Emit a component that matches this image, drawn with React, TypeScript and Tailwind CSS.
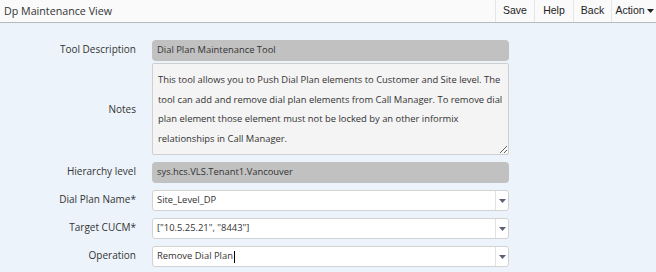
import { ReactNode } from "react";

const sans = "font-['Open_Sans',_'Noto_Sans',_sans-serif]";

function Row({ label, children, top = "pt-[2px]" }: { label: string; children: ReactNode; top?: string }) {
  return (
    <div className="flex items-start gap-[16px]">
      <div className={`w-[136px] shrink-0 text-right text-[10px] leading-[14px] text-[#333] ${top}`}>{label}</div>
      {children}
    </div>
  );
}

function ReadOnlyBox({ value }: { value: string }) {
  return (
    <div className="flex h-[21px] w-[357px] items-center rounded-[4px] bg-[#c1c1c1] px-[5px] text-[9.4px] text-[#333]">
      {value}
    </div>
  );
}

function SelectBox({ value, cursor }: { value: string; cursor?: boolean }) {
  return (
    <div className="flex h-[21px] w-[357px] items-stretch rounded-[3px] border border-[#d2d2d2] bg-white">
      <div className="flex flex-1 items-center px-[4px] text-[9.4px] text-[#333]">
        {value}
        {cursor && <span className="ml-[1px] inline-block h-[12px] w-px bg-black" />}
      </div>
      <div className="flex w-[13px] items-center justify-center border-l border-[#e2e2e2]">
        <svg width="7" height="4" viewBox="0 0 7 4">
          <polygon points="0,0 7,0 3.5,4" fill="#5b6074" />
        </svg>
      </div>
    </div>
  );
}

const notes =
  "This tool allows you to Push Dial Plan elements to Customer and Site level. The tool can add and remove dial plan elements from Call Manager. To remove dial plan element those element must not be locked by an other informix relationships in Call Manager.";

export default function App() {
  return (
    <div className={`h-[272px] w-[656px] overflow-hidden bg-[#edf3fa] ${sans}`}>
      <div className="flex h-[23px] items-stretch border-b border-[#b9b9b9] bg-[#fafafa]">
        <div className="flex flex-1 items-center pl-[4px] text-[10.7px] text-[#333]">Dp Maintenance View</div>
        <div className="flex items-stretch font-['Liberation_Sans',_Arial,_sans-serif] text-[10.5px] text-[#222]">
          <div className="flex w-[39px] items-center justify-center border-l border-[#e6e6e6]">Save</div>
          <div className="flex w-[39px] items-center justify-center border-l border-[#e6e6e6]">Help</div>
          <div className="flex w-[38px] items-center justify-center border-l border-[#e6e6e6]">Back</div>
          <div className="flex w-[45px] items-center justify-center gap-[2px] border-l border-[#e6e6e6] pl-[1px]">
            Action
            <svg width="7" height="4" viewBox="0 0 7 4">
              <polygon points="0,0 7,0 3.5,4" fill="#222" />
            </svg>
          </div>
        </div>
      </div>

      <div className="flex flex-col pt-[17px]">
        <Row label="Tool Description">
          <ReadOnlyBox value="Dial Plan Maintenance Tool" />
        </Row>
        <div className="mt-[2px] flex items-center gap-[16px]">
          <div className="w-[136px] shrink-0 text-right text-[10px] leading-[14px] text-[#333]">Notes</div>
          <textarea
            readOnly
            defaultValue={notes}
            className="h-[92px] w-[357px] resize-y overflow-hidden rounded-[2px] border border-[#cfcfcf] bg-[#f4f4f4] px-[5px] pt-[6px] text-[9.4px] leading-[19.5px] text-[#333] outline-none"
          />
        </div>
        <div className="mt-[7px] flex flex-col gap-[7px]">
          <Row label="Hierarchy level">
            <ReadOnlyBox value="sys.hcs.VLS.Tenant1.Vancouver" />
          </Row>
          <Row label="Dial Plan Name*">
            <SelectBox value="Site_Level_DP" />
          </Row>
          <Row label="Target CUCM*">
            <SelectBox value={'["10.5.25.21", "8443"]'} />
          </Row>
          <Row label="Operation">
            <SelectBox value="Remove Dial Plan" cursor />
          </Row>
        </div>
      </div>
    </div>
  );
}
